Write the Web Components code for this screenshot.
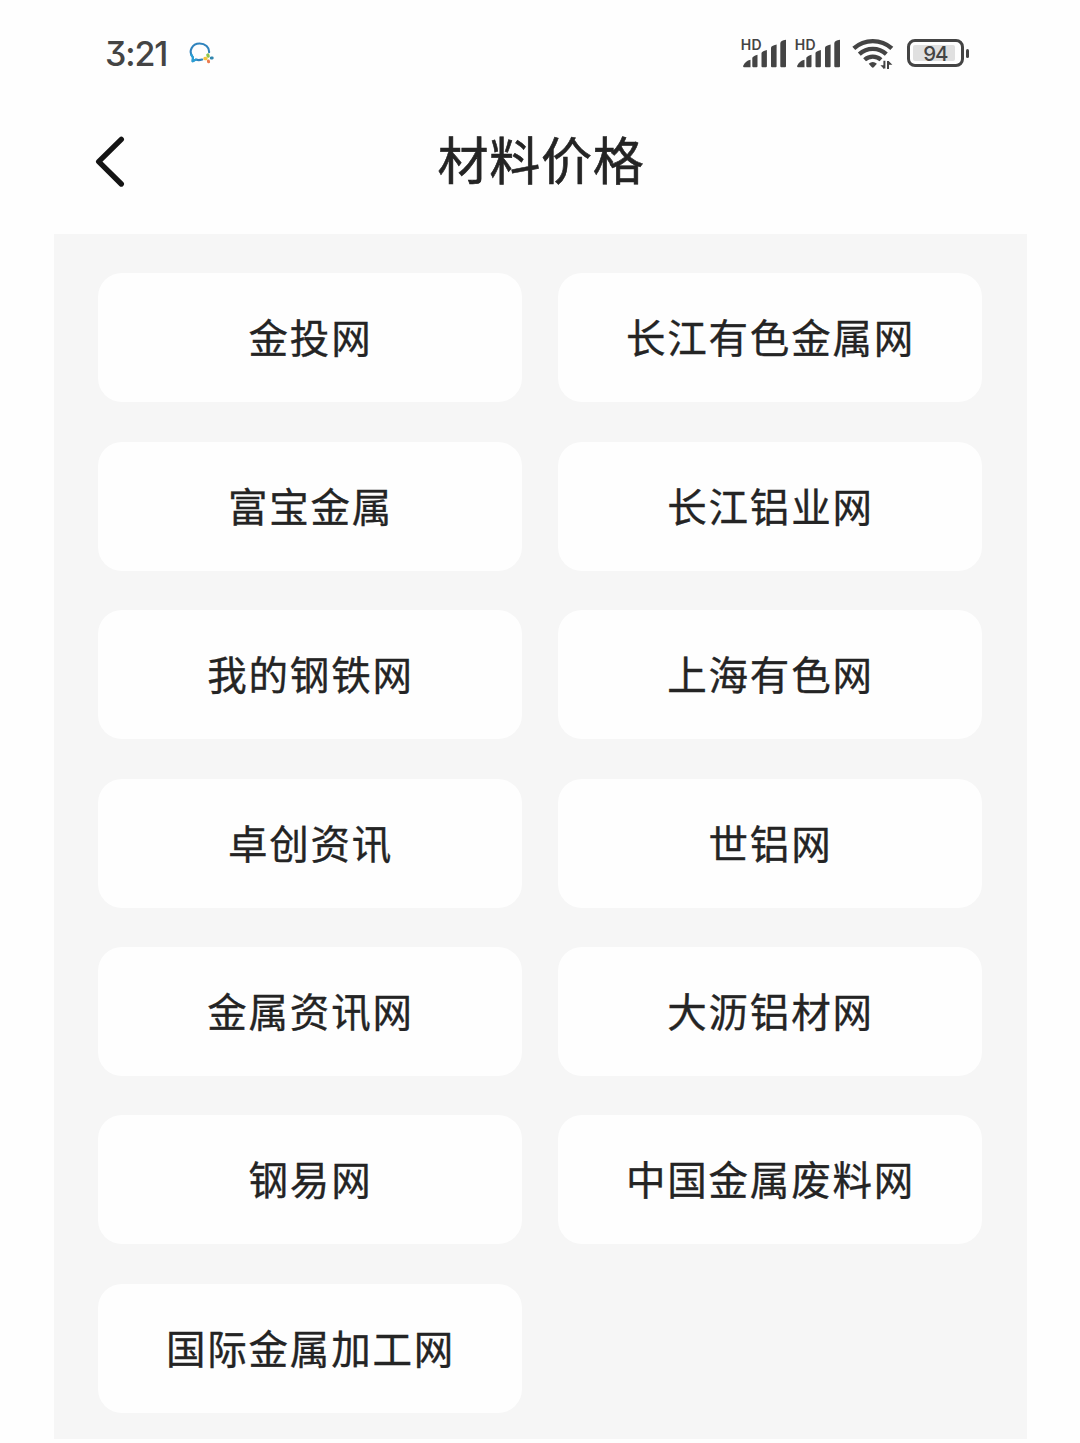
<!DOCTYPE html>
<html lang="zh-CN">
<head>
<meta charset="utf-8">
<title>材料价格</title>
<style>
  body { margin: 0; background: #fefefe; color: #242424; font-family: Inter, "Noto Sans CJK SC", sans-serif; }
</style>
</head>
<body>
<price-page></price-page>
<script>
const define = (name, html, setup) => customElements.define(name, class extends HTMLElement {
  constructor() {
    super();
    this.attachShadow({ mode: 'open' }).innerHTML = html;
    if (setup) setup(this);
  }
});

define('chat-icon', `
  <style>:host{display:block;width:26px;height:24px} svg{display:block}</style>
  <svg width="26" height="24" viewBox="0 0 26 24" fill="none" stroke-linecap="round" stroke-linejoin="round">
    <path d="M13.2 17.6 Q9.5 18.6 6.8 17.6 L3.6 19.2 L4 15.4 C-1.2 9.5 3.2 1.5 10.6 1.5 C16.2 1.5 20.4 5.4 20.1 10.2" stroke="#2f83bd" stroke-width="2.1"/>
    <path d="M2.3 12.6 Q2.8 14.2 4 15.4 L3.6 19.2 L6.8 17.6" stroke="#2b9fd4" stroke-width="2.1"/>
    <path d="M19.2 14.2 L18.8 13" stroke="#8fc34a" stroke-width="3.2"/>
    <path d="M17 16.6 L16 16.5" stroke="#f3c43a" stroke-width="3.4"/>
    <path d="M19.4 19 L19.6 19.8" stroke="#ed7b4e" stroke-width="3"/>
    <path d="M22.3 16 L23.2 15.9" stroke="#3186ae" stroke-width="3"/>
  </svg>`);

define('signal-bars', `
  <style>
    :host{display:grid;width:46px;height:32px}
    svg,span{grid-area:1/1}
    span{font:600 14px/14px Inter,sans-serif;letter-spacing:.3px;color:#444}
  </style>
  <svg width="46" height="32" viewBox="0 0 46 32" fill="#444">
    <path d="M2.2 27.8 Q4 23 9.5 21.7 V29.3 H3.2 Q1.7 29.3 2.2 27.8Z"/>
    <path d="M11.3 20 Q11.3 18.5 16.5 16.8 V28.3 Q16.5 29.3 15.5 29.3 H12.3 Q11.3 29.3 11.3 28.3Z"/>
    <path d="M20.5 15 Q20.5 13.5 25.9 12 V28.3 Q25.9 29.3 24.9 29.3 H21.5 Q20.5 29.3 20.5 28.3Z"/>
    <path d="M30 10 Q30 7.8 35.6 6.6 V28.3 Q35.6 29.3 34.6 29.3 H31 Q30 29.3 30 28.3Z"/>
    <path d="M39.3 5.5 Q39.3 2.5 45 1.8 V28.3 Q45 29.3 44 29.3 H40.3 Q39.3 29.3 39.3 28.3Z"/>
  </svg>
  <span>HD</span>`);

define('wifi-icon', `
  <style>:host{display:block;width:42px;height:32px} svg{display:block}</style>
  <svg width="42" height="32" viewBox="0 0 42 32" fill="none" stroke="#444">
    <path d="M1.8 10.4 A28.5 28.5 0 0 1 39.8 10.4" stroke-width="4.4"/>
    <path d="M7.3 16.2 A20 20 0 0 1 34.3 16.2" stroke-width="4.3"/>
    <path d="M12.6 21.8 A12.2 12.2 0 0 1 29 21.8" stroke-width="4.2"/>
    <path d="M16.7 25.8 Q20.8 22 24.9 25.8 L22 29.1 Q20.8 30.2 19.6 29.1Z" fill="#444" stroke="none"/>
    <path d="M32.4 22.8 V30.6 M36 30.9 V23" stroke-width="2"/>
    <path d="M28.4 27.2 H32 V31 Z M36.6 23 L40.4 26.8 H36.6Z" fill="#444" stroke="none"/>
  </svg>`);

define('battery-level', `
  <style>
    :host{display:flex;align-items:center;gap:2px}
    .shell{box-sizing:border-box;width:57px;height:28px;border:3px solid #444;border-radius:8px;padding:3px;display:flex}
    .fill{width:42px;background:#e0e0e0;border-radius:2px;display:flex;align-items:center;justify-content:center;padding-left:3px;box-sizing:border-box;font:500 20.5px/16px Inter,sans-serif;letter-spacing:-1.3px;color:#444}
    .fill{padding-top:1px}
    .cap{width:3.3px;height:9px;background:#444;border-radius:1.5px}
  </style>
  <div class="shell"><div class="fill"><slot></slot></div></div><div class="cap"></div>`);

define('status-bar', `
  <style>
    :host{display:flex;height:107px;padding:0 111px 0 105px;box-sizing:border-box;align-items:flex-start;justify-content:space-between}
    .left{display:flex;align-items:center;gap:21px;padding-top:34px;height:40px}
    time{display:block;width:63px;font:500 34px/40px Inter,sans-serif;letter-spacing:-1.1px;font-feature-settings:"cv09";color:#444;white-space:nowrap}
    .right{display:flex;align-items:center;padding-top:38px;height:32px}
    signal-bars + signal-bars{margin-left:8px}
    wifi-icon{margin-left:11px}
    battery-level{margin:-2px 0 0 13px}
  </style>
  <div class="left"><time>3:21</time><chat-icon></chat-icon></div>
  <div class="right"><signal-bars></signal-bars><signal-bars></signal-bars><wifi-icon></wifi-icon><battery-level>94</battery-level></div>`);

define('title-bar', `
  <style>
    :host{display:grid;grid-template-columns:94px 1fr 94px;align-items:start;height:127px}
    svg{display:block;margin-top:26px}
    h1{margin:13px 0 0;padding-left:2px;text-align:center;font:400 51px/76px "Noto Sans CJK SC",sans-serif;letter-spacing:.8px;color:#242424;-webkit-text-stroke:.6px #242424}
    button{all:unset}
  </style>
  <button aria-label="返回"><svg width="132" height="58" viewBox="0 0 132 58" fill="none" stroke="#141414" stroke-width="5.4" stroke-linecap="round" stroke-linejoin="round"><path d="M121.3 6.3 L98.7 28.7 L121.3 51"/></svg></button>
  <h1><slot></slot></h1>`);

define('source-card', `
  <style>
    :host{display:flex;align-items:center;justify-content:center;height:129px;box-sizing:border-box;padding:0 0 3px 1px;background:#fefefe;border-radius:24px;
      font:400 39.5px/58px "Noto Sans CJK SC",sans-serif;letter-spacing:1.8px;color:#242424;-webkit-text-stroke:.35px #242424}
  </style>
  <slot></slot>`);

define('source-grid', `
  <style>
    :host{display:grid;grid-template-columns:424px 424px;column-gap:36px;row-gap:39.45px;align-content:start;
      box-sizing:border-box;width:973px;height:1205px;margin-left:53.5px;padding:39.3px 44.5px 0;background:#f6f6f6}
  </style>
  <slot></slot>`);

define('price-page', `
  <style>:host{display:block;width:1080px;height:1443px;overflow:hidden}</style>
  <status-bar></status-bar>
  <title-bar>材料价格</title-bar>
  <source-grid></source-grid>`, host => {
  const names = ['金投网', '长江有色金属网', '富宝金属', '长江铝业网', '我的钢铁网', '上海有色网',
    '卓创资讯', '世铝网', '金属资讯网', '大沥铝材网', '钢易网', '中国金属废料网', '国际金属加工网'];
  const grid = host.shadowRoot.querySelector('source-grid');
  for (const name of names) {
    const card = document.createElement('source-card');
    card.textContent = name;
    grid.append(card);
  }
});
</script>
</body>
</html>
